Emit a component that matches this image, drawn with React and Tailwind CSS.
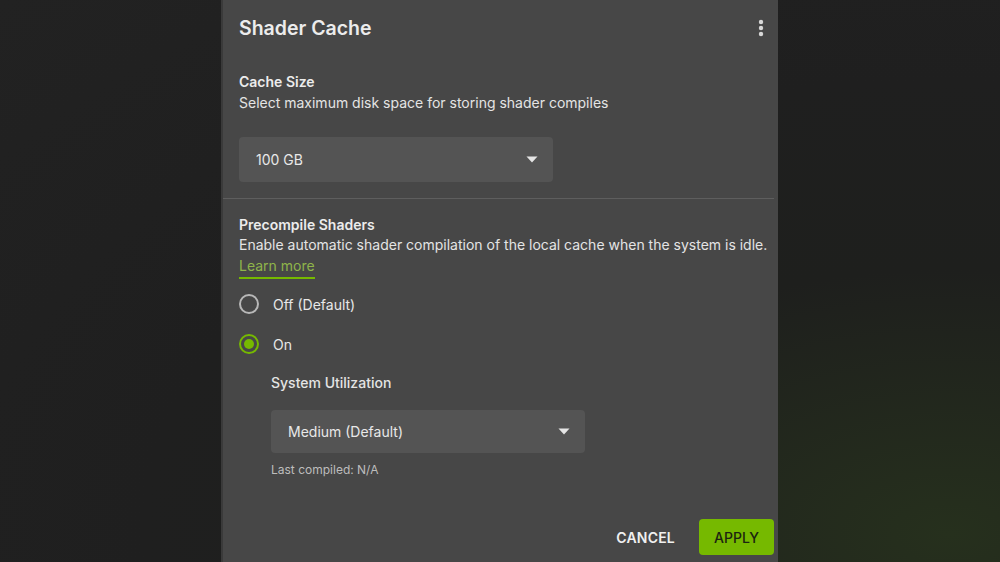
import { useState } from "react";

const font = { fontFamily: "Inter, 'Noto Sans', sans-serif" };

function Caret() {
  return (
    <svg width="12" height="7" viewBox="0 0 12 7" className="shrink-0">
      <path d="M0.5 0.5 L11.5 0.5 L6 6.5 Z" fill="#e5e5e5" />
    </svg>
  );
}

function Select({ value, className = "" }) {
  return (
    <div
      className={`flex w-[314px] items-center justify-between rounded-[4px] bg-[#545454] pl-[17px] pr-[15px] text-[14px] text-[#e8e8e8] ${className}`}
    >
      <span>{value}</span>
      <Caret />
    </div>
  );
}

function Radio({ checked, label, onClick }) {
  return (
    <button onClick={onClick} className="flex h-[20px] items-center gap-[14px] text-left">
      <span
        className={`flex h-[20px] w-[20px] items-center justify-center rounded-full border-2 ${
          checked ? "border-[#76b900]" : "border-[#b8b8b8]"
        }`}
      >
        {checked && <span className="h-[10px] w-[10px] rounded-full bg-[#76b900]" />}
      </span>
      <span className="text-[14px] text-[#e8e8e8]">{label}</span>
    </button>
  );
}

export default function App() {
  const [on, setOn] = useState(true);

  return (
    <div
      style={font}
      className="flex h-[562px] w-[1000px] overflow-hidden bg-[radial-gradient(ellipse_at_95%_95%,#26301d_0%,#1e1f1d_35%,#1f1f1f_60%,#222222_100%)] pl-[221px]"
    >
      <div className="flex w-[557px] flex-col border-l-2 border-[#3a3a3a] bg-[#474747] pl-[16px] pr-[4px]">
        {/* header */}
        <div className="flex items-center justify-between pt-[14px] pr-[10px]">
          <h1 className="text-[19.5px] font-semibold leading-[28px] text-[#ececec]">Shader Cache</h1>
          <svg width="6" height="18" viewBox="0 0 6 18">
            <circle cx="3" cy="3" r="2.2" fill="#d8d8d8" />
            <circle cx="3" cy="9" r="2.2" fill="#d8d8d8" />
            <circle cx="3" cy="15" r="2.2" fill="#d8d8d8" />
          </svg>
        </div>

        {/* cache size */}
        <div className="mt-[30px] text-[14px] font-semibold leading-[20px] text-[#ececec]">Cache Size</div>
        <div className="mt-[1px] text-[14px] leading-[20px] text-[#e4e4e4]">
          Select maximum disk space for storing shader compiles
        </div>
        <Select value="100 GB" className="mt-[24px] h-[45px]" />

        <div className="ml-[-16px] mt-[16px] h-px bg-[#5e5e5e]" />

        {/* precompile */}
        <div className="mt-[16px] text-[14px] font-semibold leading-[20px] text-[#ececec]">Precompile Shaders</div>
        <div className="text-[14px] leading-[20px] text-[#e4e4e4]">
          Enable automatic shader compilation of the local cache when the system is idle.
        </div>
        <div className="mt-[1px] self-start border-b-2 border-[#76b900] pb-[1px] text-[14px] leading-[20px] text-[#8fb54a]">
          Learn more
        </div>

        <div className="mt-[15px] flex flex-col gap-[20px]">
          <Radio checked={!on} label="Off (Default)" onClick={() => setOn(false)} />
          <Radio checked={on} label="On" onClick={() => setOn(true)} />
        </div>

        <div className="ml-[32px] flex flex-col">
          <div className="mt-[19px] text-[14px] font-medium leading-[20px] text-[#e4e4e4]">System Utilization</div>
          <Select value="Medium (Default)" className="mt-[17px] h-[43px]" />
          <div className="mt-[9px] text-[12px] leading-[16px] text-[#bdbdbd]">Last compiled: N/A</div>
        </div>

        {/* footer */}
        <div className="mt-auto mb-[7px] flex items-center justify-end gap-[24px]">
          <button className="text-[14px] font-semibold tracking-[0.2px] text-[#f0f0f0]">CANCEL</button>
          <button className="h-[36px] w-[75px] rounded-[4px] bg-[#76b900] text-[14px] font-medium text-[#1c2410]">
            APPLY
          </button>
        </div>
      </div>
    </div>
  );
}
